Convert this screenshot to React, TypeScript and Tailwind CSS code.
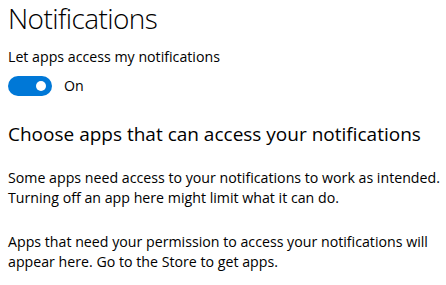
import React from 'react';

export default function App() {
  return (
    <div className="w-[446px] h-[285px] bg-white text-black pl-[8px] overflow-hidden whitespace-nowrap" style={{ fontFamily: '"Open Sans", "Noto Sans", sans-serif' }}>
      <h1 className="text-[28px] font-light leading-[34px] pt-[1px] tracking-[-0.6px]">Notifications</h1>
      <p className="text-[14.2px] leading-[20px] mt-[12px]">Let apps access my notifications</p>
      <div className="flex items-center mt-[9px] h-[20px]">
        <div className="w-[44px] h-[20px] rounded-full bg-[#0078d7] flex items-center justify-end pr-[6px]">
          <div className="w-[10px] h-[10px] rounded-full bg-white" />
        </div>
        <span className="ml-[12px] text-[14.2px] leading-[20px]">On</span>
      </div>
      <h2 className="text-[19px] leading-[26px] mt-[25px]">Choose apps that can access your notifications</h2>
      <p className="text-[14.2px] leading-[20px] mt-[21px]">
        Some apps need access to your notifications to work as intended.
        <br />
        Turning off an app here might limit what it can do.
      </p>
      <p className="text-[14.2px] leading-[20px] mt-[24px]">
        Apps that need your permission to access your notifications will
        <br />
        appear here. Go to the Store to get apps.
      </p>
    </div>
  );
}
